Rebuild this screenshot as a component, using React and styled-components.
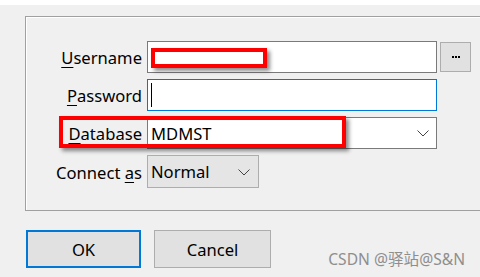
import React from 'react'
import styled, { createGlobalStyle } from 'styled-components'

const GlobalStyle = createGlobalStyle`
    html, body {
        margin: 0;
        padding: 0;
        background: #f0f0f0;
    }
    body {
        font-family: "Noto Sans", "Open Sans", sans-serif;
    }
`

const Window = styled.div`
    position: relative;
    width: 480px;
    height: 277px;
    overflow: hidden;
    background: #f0f0f0;
    border-top: 5px solid #ffffff;
    box-sizing: border-box;
    padding: 11px 0 0 25px;
`

const GroupBox = styled.div`
    width: 500px;
    border: 1px solid #a0a0a0;
    box-shadow: inset 1px 1px 0 #ffffff;
    padding: 24px 0 22px 0;
    display: flex;
    flex-direction: column;
    gap: 6px;
`

const Row = styled.div`
    position: relative;
    display: flex;
    align-items: center;
    gap: 3px;
    height: ${p => p.$h || 32}px;
`

const Label = styled.label`
    width: 118px;
    padding-right: 2px;
    box-sizing: border-box;
    text-align: right;
    font-size: 16.6px;
    color: #000;
    white-space: nowrap;
    margin-top: 1px;
    u {
        text-underline-offset: 3px;
    }
`

const Field = styled.div`
    position: relative;
    box-sizing: border-box;
    width: ${p => p.$w || 290}px;
    height: 100%;
    background: ${p => p.$grey ? '#e5e5e5' : '#ffffff'};
    border: 1px solid ${p => p.$focus ? '#0078d7' : p.$grey ? '#adadad' : '#7a7a7a'};
    display: flex;
    align-items: center;
    padding-left: 3px;
    font-size: 16.6px;
    color: #000;
`

const Caret = styled.span`
    width: 1px;
    height: 24px;
    background: #000;
`

const Chevron = styled.svg`
    position: absolute;
    right: ${p => p.$r || 8}px;
    top: 50%;
    margin-top: -3px;
`

const SmallButton = styled.button`
    width: 31px;
    height: 30px;
    box-sizing: border-box;
    background: #e1e1e1;
    border: 1px solid #adadad;
    display: flex;
    align-items: center;
    justify-content: center;
    gap: 1px;
    padding: 0;
    align-self: flex-start;
    margin-top: 1px;
`

const Dot = styled.span`
    width: 2px;
    height: 2px;
    background: #000;
`

const Highlight = styled.div`
    position: absolute;
    box-sizing: border-box;
    left: ${p => p.$x}px;
    top: ${p => p.$y}px;
    width: ${p => p.$w}px;
    height: ${p => p.$h}px;
    border: 4px solid #ff0000;
    box-shadow: 3px 3px 4px rgba(0, 0, 0, 0.45);
    background: ${p => p.$fill ? '#ffffff' : 'transparent'};
`

const Buttons = styled.div`
    display: flex;
    gap: 13px;
    margin-top: 19px;
    padding-left: 1px;
`

const DialogButton = styled.button`
    width: ${p => p.$w}px;
    height: 38px;
    box-sizing: border-box;
    background: #e1e1e1;
    border: ${p => p.$default ? '2px solid #0078d7' : '1px solid #adadad'};
    font-family: inherit;
    font-size: 16.6px;
    color: #000;
`

const Watermark = styled.div`
    position: absolute;
    right: 15px;
    bottom: 7px;
    font-family: "Noto Sans", "Noto Sans CJK SC", sans-serif;
    font-size: 15.6px;
    color: #8e8e8e;
`

function Arrow({ r }) {
    return (
        <Chevron $r={r} width="12" height="7" viewBox="0 0 12 7">
            <polyline points="0.5,0.5 6,6 11.5,0.5" fill="none" stroke="#444" strokeWidth="1" />
        </Chevron>
    )
}

export default function App() {
    return (
        <>
            <GlobalStyle />
            <Window>
                <GroupBox>
                    <Row>
                        <Label><u>U</u>sername</Label>
                        <Field>
                            <Highlight $x={3} $y={6} $w={116} $h={20} $fill />
                        </Field>
                        <SmallButton aria-label="...">
                            <Dot /><Dot /><Dot />
                        </SmallButton>
                    </Row>
                    <Row>
                        <Label><u>P</u>assword</Label>
                        <Field $focus>
                            <Caret />
                        </Field>
                    </Row>
                    <Row>
                        <Label><u>D</u>atabase</Label>
                        <Field>
                            MDMST
                            <Arrow r={7} />
                        </Field>
                        <Highlight $x={33} $y={-1} $w={287} $h={32} />
                    </Row>
                    <Row $h={33}>
                        <Label>Connect <u>a</u>s</Label>
                        <Field $w={112} $grey>
                            Normal
                            <Arrow r={8} />
                        </Field>
                    </Row>
                </GroupBox>
                <Buttons>
                    <DialogButton $w={115} $default>OK</DialogButton>
                    <DialogButton $w={117}>Cancel</DialogButton>
                </Buttons>
                <Watermark>CSDN @驿站@S&amp;N</Watermark>
            </Window>
        </>
    )
}
